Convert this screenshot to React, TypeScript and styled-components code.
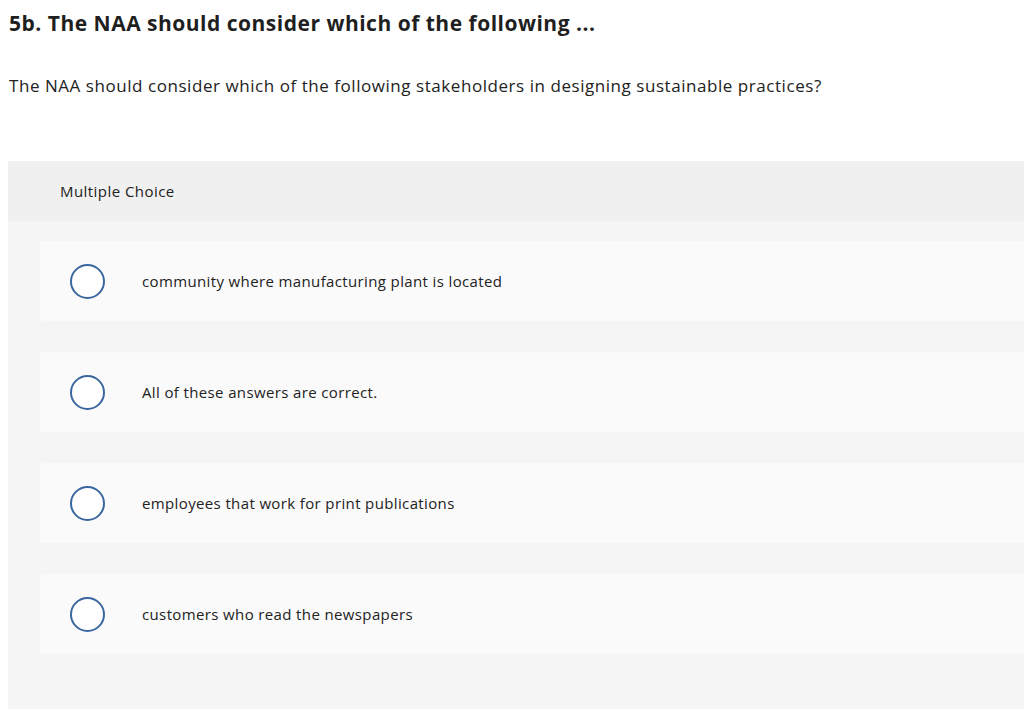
import React from 'react'
import styled, { createGlobalStyle } from 'styled-components'

const GlobalStyle = createGlobalStyle`
  html {
    overflow: hidden;
  }
  body {
    margin: 0;
    background: #ffffff;
    color: #222222;
    font-family: "Open Sans", Lato, sans-serif;
  }
`

const Page = styled.main`
  padding: 8px 0 0 8px;
`

const Title = styled.h1`
  margin: 0;
  padding-left: 1px;
  font-size: 21px;
  line-height: 30px;
  font-weight: 700;
  letter-spacing: 0.5px;
  color: #1f1f1f;
`

const Prompt = styled.p`
  margin: 36px 0 0;
  padding-left: 1px;
  font-size: 17px;
  line-height: 24px;
  letter-spacing: 0.55px;
  color: #222222;
`

const Panel = styled.section`
  margin-top: 63px;
  background: #f5f5f5;
  padding-bottom: 60px;
`

const PanelHeader = styled.div`
  height: 60px;
  display: flex;
  align-items: center;
  padding-left: 52px;
  background: #f0f0f0;
  font-size: 15px;
  letter-spacing: 0.45px;
  color: #222222;
`

const Options = styled.div`
  display: flex;
  flex-direction: column;
  gap: 31px;
  padding: 20px 0 0 32px;
`

const Option = styled.label`
  height: 80px;
  display: flex;
  align-items: center;
  background: #fafafa;
  border-radius: 3px 0 0 3px;
  cursor: pointer;
`

const Radio = styled.span`
  box-sizing: border-box;
  width: 35px;
  height: 35px;
  margin-left: 30px;
  margin-right: 37px;
  border-radius: 50%;
  border: 2px solid #3b67a0;
  background: #ffffff;
  flex: none;
`

const OptionText = styled.span`
  font-size: 15px;
  letter-spacing: 0.37px;
  color: #222222;
`

const answers = [
  'community where manufacturing plant is located',
  'All of these answers are correct.',
  'employees that work for print publications',
  'customers who read the newspapers',
]

function App() {
  return (
    <Page>
      <GlobalStyle />
      <Title>5b. The NAA should consider which of the following ...</Title>
      <Prompt>
        The NAA should consider which of the following stakeholders in designing sustainable practices?
      </Prompt>
      <Panel>
        <PanelHeader>Multiple Choice</PanelHeader>
        <Options>
          {answers.map((a) => (
            <Option key={a}>
              <Radio />
              <OptionText>{a}</OptionText>
            </Option>
          ))}
        </Options>
      </Panel>
    </Page>
  )
}

export default App
